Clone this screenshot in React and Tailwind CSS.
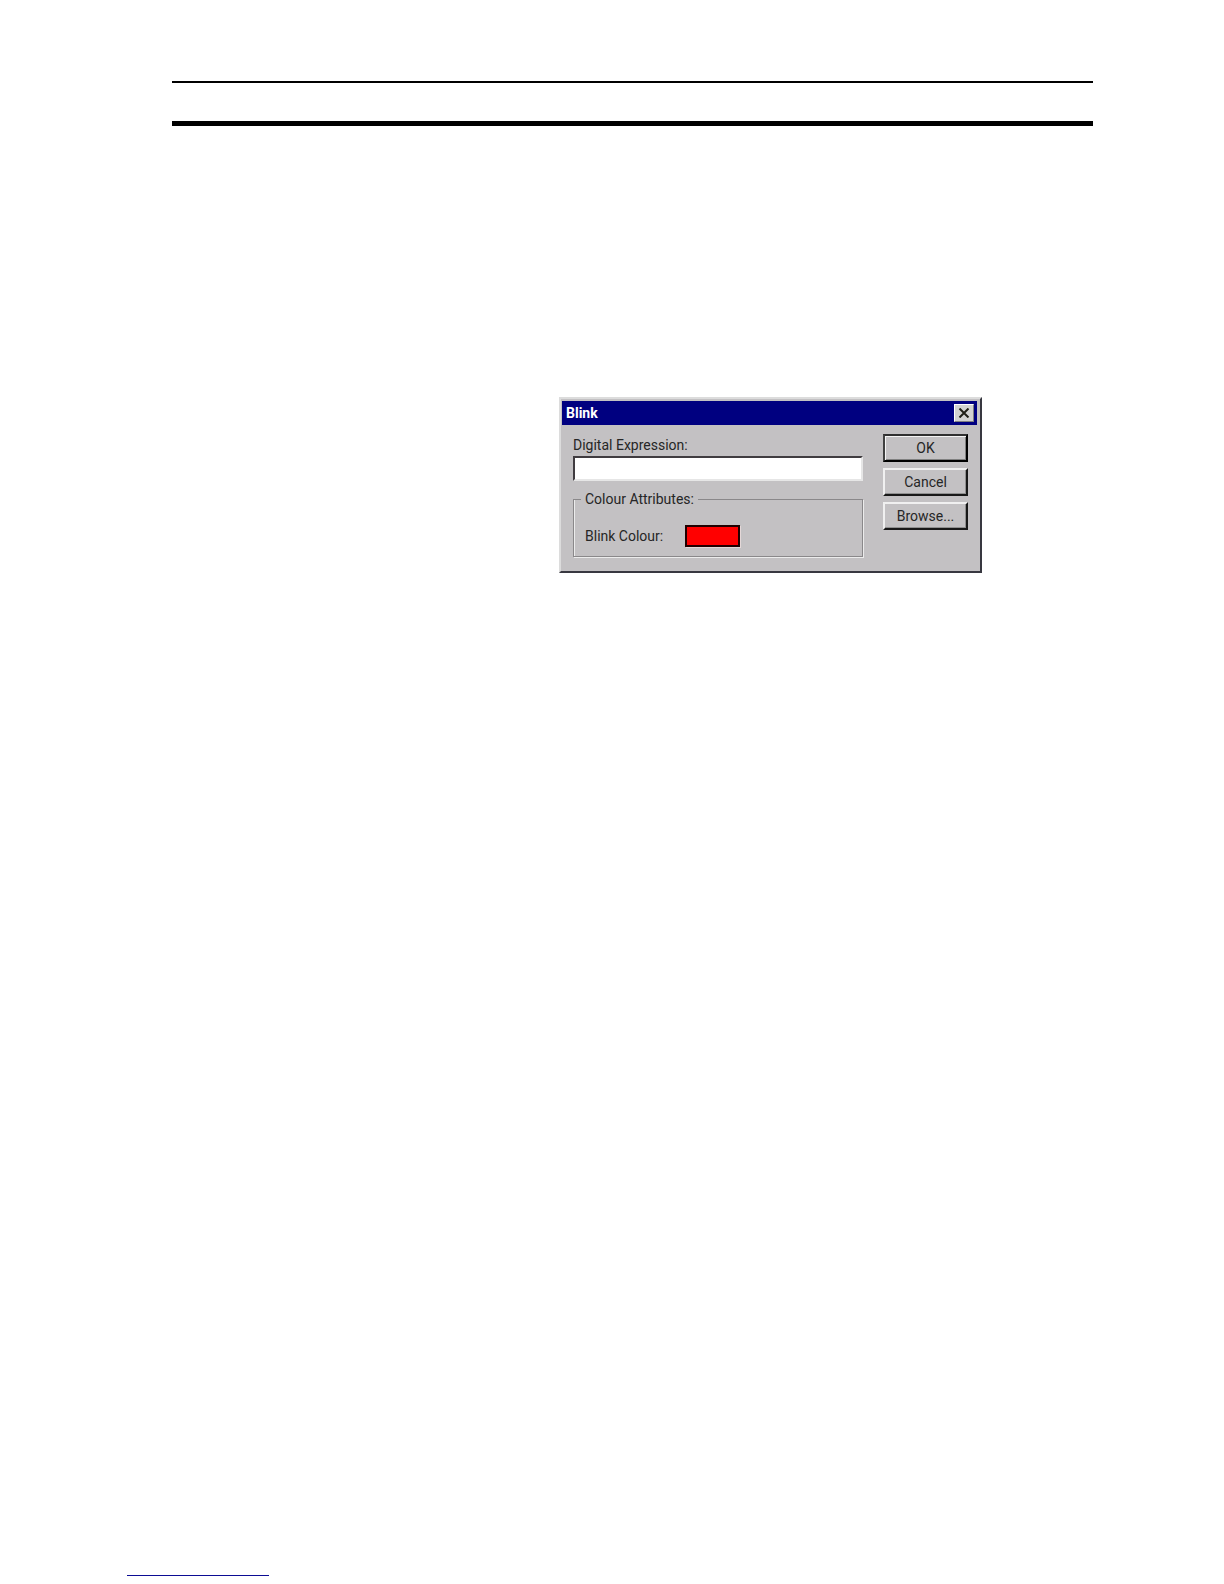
const dialogButtons = [
  { label: "OK", isDefault: true },
  { label: "Cancel" },
  { label: "Browse..." },
];

function CloseIcon() {
  return (
    <svg width="12" height="10" viewBox="0 0 12 10" aria-hidden="true">
      <path d="M1.5 0.5L10.5 9.5M10.5 0.5L1.5 9.5" stroke="#202018" strokeWidth="2" fill="none" />
    </svg>
  );
}

function DialogButton({ label, isDefault }) {
  return (
    <button
      type="button"
      className={`h-7 w-full border-2 pb-px text-center text-sm leading-5 ${
        isDefault
          ? "border-t-[#303030] border-l-[#404040] border-r-black border-b-black shadow-[inset_1px_1px_0_#f4f4f4,inset_-1px_-1px_0_#808080]"
          : "border-t-[#f0f0f0] border-l-[#f0f0f0] border-r-[#181818] border-b-[#181818] shadow-[inset_-1px_-1px_0_#909090]"
      }`}
    >
      {label}
    </button>
  );
}

function BlinkDialog() {
  return (
    <section
      role="dialog"
      aria-labelledby="blink-title"
      className="w-[423px] border-2 border-t-[#dcdcdc] border-l-[#dcdcdc] border-r-[#383840] border-b-[#383840] bg-[#c3c1c3] pt-[2px] pl-px pr-[3px] pb-[14px] text-[#262626]"
    >
      {/* Title bar */}
      <div className="flex h-6 items-center justify-between bg-[#000080] pl-1 pr-[3px]">
        <h1 id="blink-title" className="text-sm leading-5 font-bold text-white">Blink</h1>
        <button
          type="button"
          aria-label="Close"
          className="flex h-[18px] w-5 items-center justify-center border border-t-white border-l-white border-r-[#808080] border-b-[#808080] bg-[#d2d2d2]"
        >
          <CloseIcon />
        </button>
      </div>

      <div className="flex justify-between pt-[9px] pl-[11px] pr-[9px]">
        <form className="w-[290px]">
          <label htmlFor="expression" className="block pt-px text-sm leading-5">
            Digital Expression:
          </label>
          <input
            id="expression"
            type="text"
            className="mt-px block h-[25px] w-full border-2 border-t-[#403c40] border-l-[#403c40] border-r-[#e6e6e6] border-b-[#e6e6e6] bg-white px-1 text-sm outline-none"
          />

          {/* Colour group */}
          <fieldset className="mt-2 border border-[#8a888a] px-[11px] pb-[9px] shadow-[1px_1px_0_#ececec,inset_1px_0_0_#ececec]">
            <legend className="-ml-1 px-1 text-sm leading-5">Colour Attributes:</legend>
            <div className="flex items-center pt-4">
              <label htmlFor="blink-colour" className="w-[100px] text-sm leading-5">
                Blink Colour:
              </label>
              <button
                id="blink-colour"
                type="button"
                className="h-[22px] w-[55px] border-2 border-[#200000] bg-[#ff0000] shadow-[1px_1px_0_#e4d8d8]"
              />
            </div>
          </fieldset>
        </form>

        <div className="flex w-[85px] flex-col gap-[6px]">
          {dialogButtons.map((item) => (
            <DialogButton key={item.label} {...item} />
          ))}
        </div>
      </div>
    </section>
  );
}

export default function App() {
  return (
    <div className="flex min-h-screen flex-col bg-white font-[Roboto,'Liberation_Sans',sans-serif]">
      {/* Page header rules */}
      <header className="mt-[81px] mr-[131px] ml-[172px] h-[45px] border-t-2 border-b-5 border-black" />

      <main className="mt-[271px] mr-[242px] flex justify-end">
        <BlinkDialog />
      </main>

      <footer className="mt-auto pb-2 pl-[127px]">
        <a
          href="#top"
          aria-label="Back to top"
          className="block h-4 w-[142px] border-b border-b-[#0c0c94]"
        />
      </footer>
    </div>
  );
}
